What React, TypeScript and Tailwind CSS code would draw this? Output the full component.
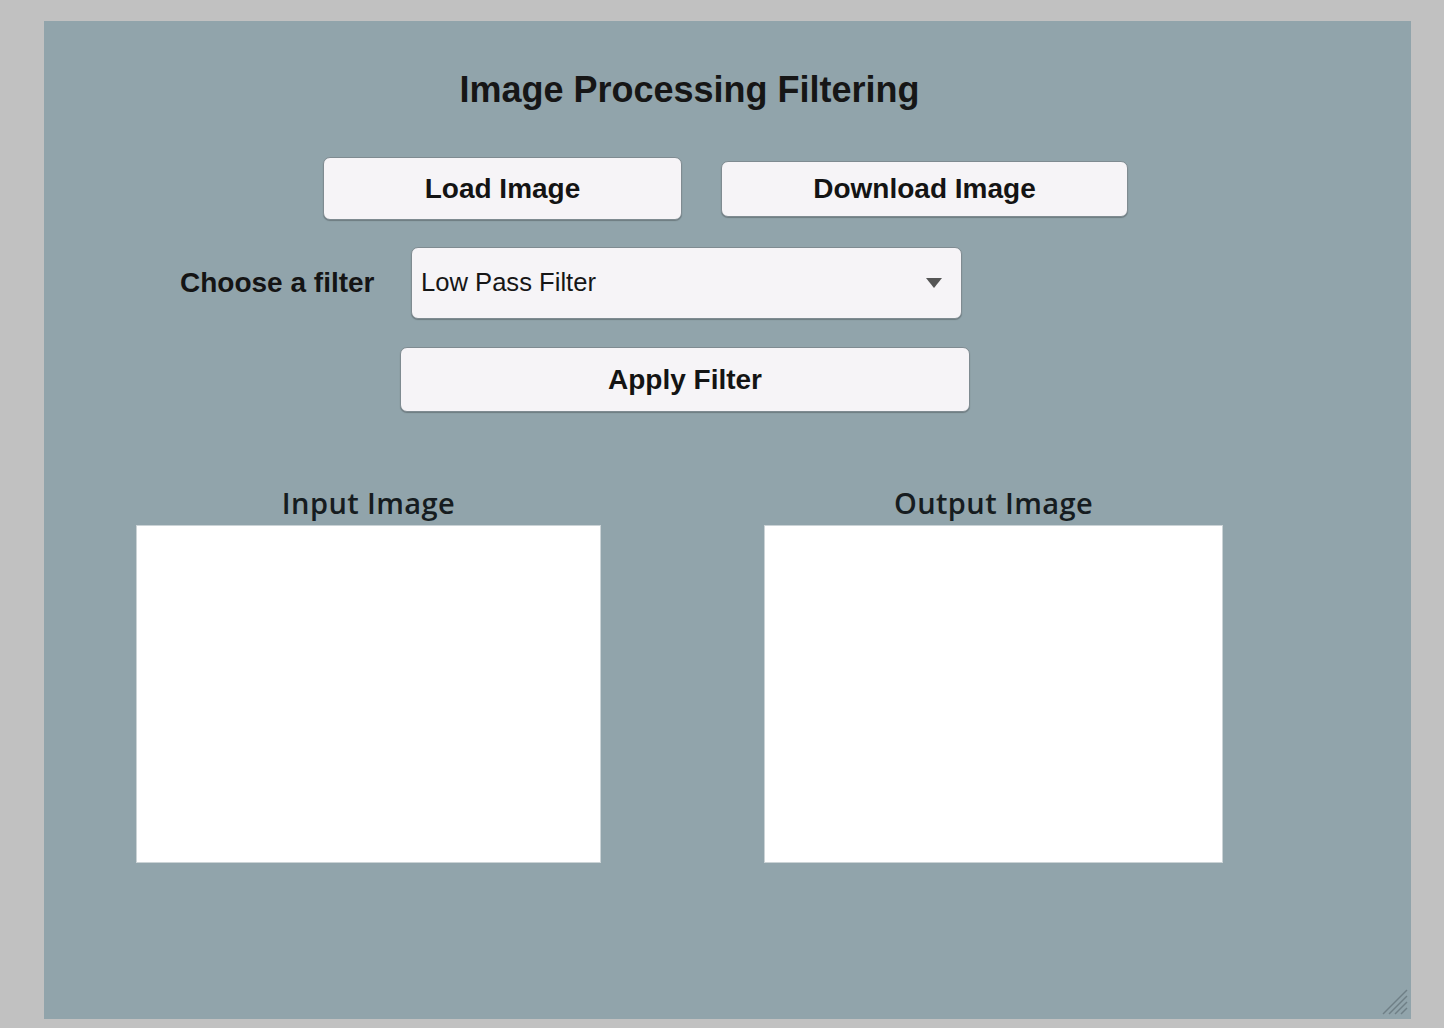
import React from "react";

const btn =
  "bg-[#f6f4f7] border border-[#7f8b91] rounded-[7px] shadow-[0_1px_1px_rgba(0,0,0,0.25)] flex items-center justify-center font-bold text-[28px] text-[#141414] leading-none";

export default function App() {
  return (
    <div
      className="w-[1444px] h-[1028px] bg-[#c1c1c1] pt-[21px] pl-[44px] overflow-hidden"
      style={{ fontFamily: '"Liberation Sans", Arial, sans-serif' }}
    >
      <div className="relative w-[1367px] h-[998px] bg-[#91a4ab] pt-[51px] flex flex-col">
        <h1 className="text-center text-[36px] font-bold leading-none text-[#161616] pr-[76px]">
          Image Processing Filtering
        </h1>

        <div className="flex items-start mt-[49px] pl-[279px] gap-[39px]">
          <button className={`${btn} w-[359px] h-[63px]`}>Load Image</button>
          <button className={`${btn} w-[407px] h-[56px] mt-[4px]`}>Download Image</button>
        </div>

        <div className="flex items-center mt-[27px] pl-[136px]">
          <span className="text-[28px] font-bold text-[#141414] leading-none w-[231px]">Choose a filter</span>
          <div className="w-[551px] h-[72px] bg-[#f6f4f7] border border-[#7f8b91] rounded-[7px] shadow-[0_1px_1px_rgba(0,0,0,0.25)] flex items-center pl-[9px] pr-[19px]">
            <span className="text-[25.6px] text-[#161616] leading-none flex-1">Low Pass Filter</span>
            <svg width="16" height="10" viewBox="0 0 16 10">
              <path d="M0 0 H16 L8 10 Z" fill="#555555" />
            </svg>
          </div>
        </div>

        <div className="flex mt-[28px] pl-[356px]">
          <button className={`${btn} w-[570px] h-[65px]`}>Apply Filter</button>
        </div>

        <div className="flex items-start mt-[75px] pl-[92px] gap-[163px]">
          <div className="flex flex-col items-center w-[465px]">
            <span
              className="text-[29px] font-semibold leading-[32px] text-[#161c20] tracking-[0.4px]"
              style={{ fontFamily: '"Open Sans", "Noto Sans", sans-serif' }}
            >
              Input Image
            </span>
            <div className="mt-[6px] w-[465px] h-[338px] bg-white border border-[#cbd3d6]" />
          </div>
          <div className="flex flex-col items-center w-[459px]">
            <span
              className="text-[29px] font-semibold leading-[32px] text-[#161c20] tracking-[0.4px]"
              style={{ fontFamily: '"Open Sans", "Noto Sans", sans-serif' }}
            >
              Output Image
            </span>
            <div className="mt-[6px] w-[459px] h-[338px] bg-white border border-[#cbd3d6]" />
          </div>
        </div>

        <svg
          className="absolute right-[3px] bottom-[4px]"
          width="26"
          height="26"
          viewBox="0 0 26 26"
        >
          <g stroke="#6f7f86" strokeWidth="1.4">
            <line x1="25" y1="1" x2="1" y2="25" />
            <line x1="25" y1="7" x2="7" y2="25" />
            <line x1="25" y1="13" x2="13" y2="25" />
            <line x1="25" y1="19" x2="19" y2="25" />
          </g>
        </svg>
      </div>
    </div>
  );
}
